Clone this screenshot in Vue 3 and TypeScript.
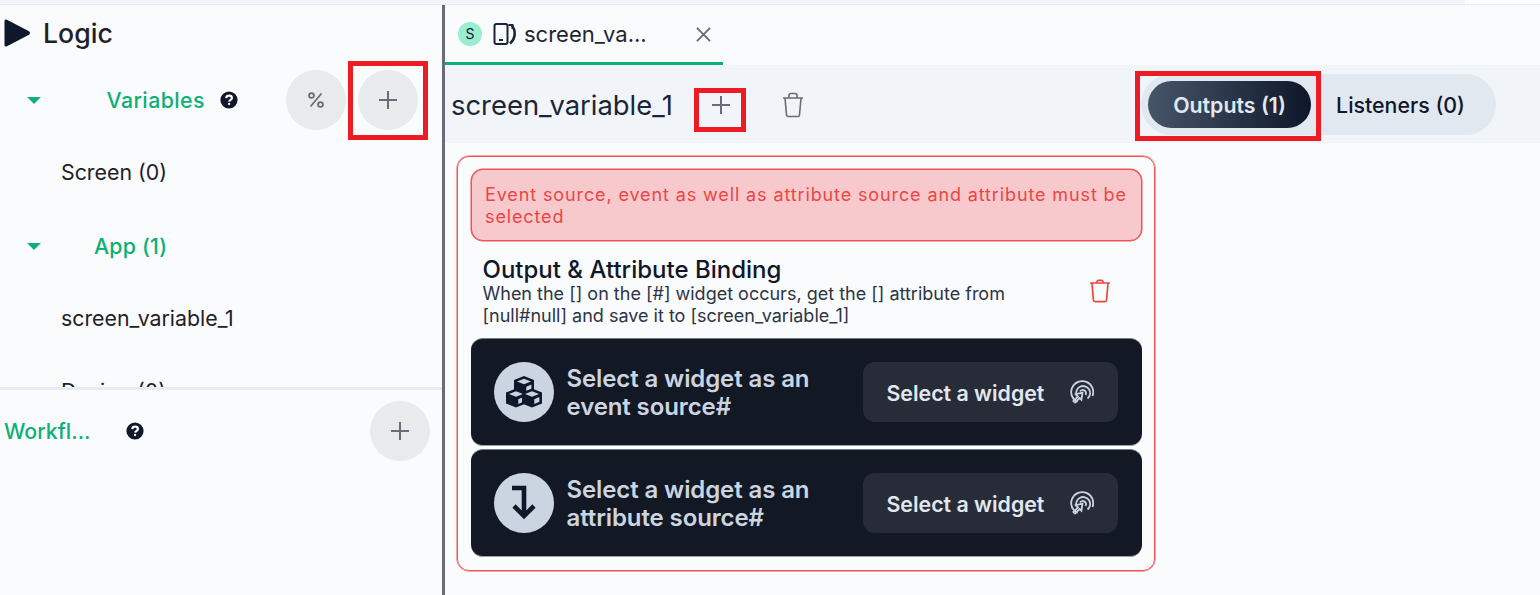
<template>
  <div class="page">
    <div class="top-strip"><div class="top-strip-end"></div></div>
    <div class="main">
      <aside class="sidebar">
        <div class="logic-section">
          <div class="logic-title">
            <svg class="play-icon" viewBox="0 0 27 30"><path d="M2.5 1.5 L25 13.2 Q27 15 25 16.8 L2.5 28.5 Q0.5 29 0.5 27 V3 Q0.5 1 2.5 1.5 Z" /></svg>
            <span>Logic</span>
          </div>
          <div class="section-row">
            <span class="caret"></span>
            <span class="section-label variables-label">Variables</span>
            <svg class="help-icon" viewBox="0 0 18 18"><circle cx="9" cy="9" r="8.6" /><path class="help-mark" d="M6.3 7.1 C6.4 5.5 7.6 4.7 9.1 4.7 C10.7 4.7 11.9 5.7 11.9 7 C11.9 8.9 9.3 8.8 9.2 10.6" /><circle class="help-dot" cx="9.1" cy="13" r="1.15" /></svg>
            <div class="row-actions">
              <button class="round-btn">
                <svg viewBox="0 0 20 20" class="percent-icon"><circle cx="5.5" cy="5.5" r="2.4" /><circle cx="14.5" cy="14.5" r="2.4" /><path d="M15.5 3.5 L4.5 16.5" /></svg>
              </button>
              <button class="round-btn">
                <svg viewBox="0 0 20 20" class="plus-icon"><path d="M10 1 V19 M1 10 H19" /></svg>
              </button>
            </div>
          </div>
          <div class="list-item">Screen (0)</div>
          <div class="section-row app-row">
            <span class="caret"></span>
            <span class="section-label app-label">App (1)</span>
          </div>
          <div class="list-item">screen_variable_1</div>
          <div class="list-item clipped">Design (0)</div>
        </div>
        <div class="workflow-section">
          <span class="section-label workflow-label">Workfl...</span>
          <svg class="help-icon workflow-help" viewBox="0 0 18 18"><circle cx="9" cy="9" r="8.6" /><path class="help-mark" d="M6.3 7.1 C6.4 5.5 7.6 4.7 9.1 4.7 C10.7 4.7 11.9 5.7 11.9 7 C11.9 8.9 9.3 8.8 9.2 10.6" /><circle class="help-dot" cx="9.1" cy="13" r="1.15" /></svg>
          <button class="round-btn workflow-add">
            <svg viewBox="0 0 20 20" class="plus-icon"><path d="M10 1 V19 M1 10 H19" /></svg>
          </button>
        </div>
      </aside>

      <section class="editor">
        <div class="tab-bar">
          <div class="tab">
            <span class="avatar">S</span>
            <svg class="tab-icon" viewBox="0 0 24 24">
              <rect x="1.5" y="2" width="13" height="20" rx="2" />
              <path d="M6 18 H10" />
              <path class="tab-icon-curve" d="M18.5 3 C23 8 23 16 17 21.5" />
              <path d="M15.5 3 H19.5 V7" />
            </svg>
            <span class="tab-title">screen_va...</span>
            <svg class="close-icon" viewBox="0 0 16 16"><path d="M1 1 L15 15 M15 1 L1 15" /></svg>
          </div>
        </div>

        <div class="toolbar">
          <span class="var-name">screen_variable_1</span>
          <svg class="plus-icon toolbar-plus" viewBox="0 0 20 20"><path d="M10 1 V19 M1 10 H19" /></svg>
          <svg class="trash-icon" viewBox="0 0 24 26">
            <path d="M2 6 H22 M8 6 V3.5 C8 2.5 8.8 1.5 10 1.5 H14 C15.2 1.5 16 2.5 16 3.5 V6 M4 6 L5.5 23 C5.6 24 6.3 24.5 7.2 24.5 H16.8 C17.7 24.5 18.4 24 18.5 23 L20 6" />
          </svg>
          <div class="toggle">
            <button class="toggle-item active">Outputs (1)</button>
            <button class="toggle-item">Listeners (0)</button>
          </div>
        </div>

        <div class="content">
          <div class="binding-card">
            <div class="error-box">Event source, event as well as attribute source and attribute must be selected</div>
            <div class="binding-head">
              <div class="binding-text">
                <div class="binding-title">Output &amp; Attribute Binding</div>
                <div class="binding-desc">When the [] on the [#] widget occurs, get the [] attribute from [null#null] and save it to [screen_variable_1]</div>
              </div>
              <svg class="trash-red" viewBox="0 0 22 24">
                <path d="M1 4 H21 M7.5 4 L8 2.4 C8.2 1.7 8.7 1.4 9.4 1.4 H12.6 C13.3 1.4 13.8 1.7 14 2.4 L14.5 4 M3 4 L4.4 21 C4.5 22 5.1 22.6 6 22.6 H16 C16.9 22.6 17.5 22 17.6 21 L19 4" />
              </svg>
            </div>
            <div class="source-list">
              <div v-for="source in sources" :key="source.label" class="source-row">
                <span class="source-badge">
                  <svg v-if="source.icon === 'cubes'" class="cubes-icon" viewBox="0 0 36 32">
                    <g v-for="pos in cubePositions" :key="pos" :transform="pos">
                      <path class="cube-dark" d="M10 0 L20 4 V15 L10 19 L0 15 V4 Z" />
                      <path class="cube-light" d="M3 5.5 L10 8.3 L17 5.5 L10 2.8 Z" />
                      <path class="cube-light" d="M12.3 10.7 L17.4 8.6 V13.3 L12.3 15.4 Z" />
                    </g>
                  </svg>
                  <svg v-else class="arrow-icon" viewBox="0 0 26 36">
                    <path d="M1 3 H13 V31 M3 21 L13 31 L23 21" />
                  </svg>
                </span>
                <span class="source-label">{{ source.label }}</span>
                <button class="select-btn">
                  <span class="select-text">Select a widget</span>
                  <svg class="target-icon" viewBox="0 0 24 24">
                    <path d="M7.5 22 A11 11 0 1 1 22.5 16" />
                    <path d="M6.6 15.5 A7 7 0 1 1 17.5 18.5" />
                    <path d="M10 11.5 A3 3 0 1 1 15.5 15" />
                    <path d="M12.5 12.6 L5.8 14.2 L8 16.4 L3.4 21 L5 22.6 L9.6 18 L11.4 19.7 Z" />
                  </svg>
                </button>
              </div>
            </div>
          </div>
        </div>
      </section>
    </div>

    <!-- annotation boxes drawn on top of the screenshot -->
    <span class="mark mark-add"></span>
    <span class="mark mark-plus"></span>
    <span class="mark mark-outputs"></span>
  </div>
</template>

<script setup lang="ts">
interface Source {
  label: string
  icon: 'cubes' | 'arrow'
}

const sources: Source[] = [
  { label: 'Select a widget as an event source#', icon: 'cubes' },
  { label: 'Select a widget as an attribute source#', icon: 'arrow' }
]

const cubePositions = ['translate(8 0)', 'translate(0 12.5)', 'translate(16 12.5)']
</script>

<style>
html,
body {
  margin: 0;
  background: #fafbfd;
}
</style>

<style scoped>
.page {
  position: relative;
  width: 1540px;
  height: 595px;
  overflow: hidden;
  background: #fafbfd;
  font-family: Inter, 'Noto Sans', sans-serif;
  color: #1f2126;
}

button {
  font-family: inherit;
  border: none;
  padding: 0;
}

.top-strip {
  height: 4px;
  background: #f1f5f9;
  border-bottom: 1px solid #e4ebf3;
  display: flex;
  justify-content: flex-end;
}

.top-strip-end {
  width: 75px;
  background: #fff;
}

.main {
  display: flex;
  height: 590px;
}

.sidebar {
  width: 442px;
  flex: none;
  border-right: 3px solid #696b78;
  display: flex;
  flex-direction: column;
}

.logic-section {
  height: 382px;
  overflow: hidden;
  border-bottom: 3px solid #e6eaf2;
  flex: none;
}

.logic-title {
  height: 55px;
  padding-left: 4px;
  display: flex;
  align-items: center;
  gap: 12px;
  font-size: 26.67px;
  font-weight: 500;
  box-sizing: border-box;
}

.play-icon {
  width: 27px;
  height: 30px;
  fill: #0f172a;
}

.section-row {
  height: 80px;
  display: flex;
  align-items: center;
  padding-left: 27px;
}

.caret {
  width: 0;
  height: 0;
  border-left: 7.5px solid transparent;
  border-right: 7.5px solid transparent;
  border-top: 7px solid #10b074;
  flex: none;
}

.section-label {
  color: #0db075;
  font-size: 21.33px;
  font-weight: 500;
  letter-spacing: 0.2px;
}

.variables-label {
  margin-left: 65.5px;
  letter-spacing: 0.42px;
}

.app-label {
  margin-left: 53px;
}

.help-icon {
  width: 18px;
  height: 18px;
  flex: none;
  margin-left: 15px;
}

.help-icon > circle:first-child {
  fill: #0f172a;
}

.help-mark {
  fill: none;
  stroke: #fff;
  stroke-width: 2.2;
}

.help-dot {
  fill: #fff;
}

.row-actions {
  margin-left: auto;
  margin-right: 24px;
  display: flex;
  gap: 12px;
}

.round-btn {
  width: 60px;
  height: 60px;
  border-radius: 50%;
  background: #e7ebeb;
  display: flex;
  align-items: center;
  justify-content: center;
  flex: none;
}

.percent-icon {
  width: 20px;
  height: 20px;
  fill: none;
  stroke: #696b78;
  stroke-width: 1.8;
}

.plus-icon {
  width: 20px;
  height: 20px;
  fill: none;
  stroke: #696b78;
  stroke-width: 2;
}

.list-item {
  height: 64px;
  padding-left: 61px;
  font-size: 21.33px;
  line-height: 24px;
  display: flex;
  align-items: center;
}

.app-row {
  margin-top: 2px;
}

.clipped {
  margin-top: 9px;
}

.workflow-section {
  display: flex;
  align-items: center;
  padding: 11px 12px 0 4px;
  height: 60px;
}

.workflow-label {
  width: 113px;
  flex: none;
  letter-spacing: 0;
}

.workflow-help {
  margin-left: 9px;
}

.workflow-add {
  margin-left: auto;
}

.editor {
  flex: 1;
  min-width: 0;
  display: flex;
  flex-direction: column;
}

.tab-bar {
  height: 60px;
  display: flex;
  flex: none;
}

.tab {
  width: 278px;
  height: 60px;
  box-sizing: border-box;
  border-bottom: 3px solid #10b074;
  padding: 0 12px 0 13px;
  display: flex;
  align-items: center;
  gap: 11px;
}

.avatar {
  width: 24px;
  height: 24px;
  border-radius: 50%;
  background: #99eed0;
  color: #0f172a;
  font-size: 14px;
  display: flex;
  align-items: center;
  justify-content: center;
  flex: none;
}

.tab-icon {
  width: 24px;
  height: 24px;
  fill: none;
  stroke: #1b2538;
  stroke-width: 2;
  flex: none;
  margin-right: -4px;
}

.tab-icon-curve {
  stroke-width: 2.6;
}

.tab-title {
  font-size: 22px;
  line-height: 26px;
  color: #1f2633;
  white-space: nowrap;
}

.close-icon {
  width: 15px;
  height: 15px;
  margin-left: auto;
  margin-top: 2px;
  fill: none;
  stroke: #696b78;
  stroke-width: 2;
}

.toolbar {
  height: 78px;
  flex: none;
  box-sizing: border-box;
  padding: 1px 0 0 6px;
  background: #f1f5f9;
  display: flex;
  align-items: center;
}

.var-name {
  font-size: 27.4px;
  color: #1b2538;
  width: 231px;
  flex: none;
  white-space: nowrap;
}

.toolbar-plus {
  margin-left: 29px;
}

.trash-icon {
  width: 24px;
  height: 26px;
  fill: none;
  stroke: #696b78;
  stroke-width: 1.6;
  margin-left: 50px;
}

.toggle {
  margin-left: auto;
  margin-right: 44px;
  width: 355px;
  height: 61px;
  box-sizing: border-box;
  padding: 7px;
  border-radius: 31px;
  background: #e2e8f0;
  display: flex;
  align-items: center;
}

.toggle-item {
  height: 47px;
  border-radius: 24px;
  background: transparent;
  color: #0f172a;
  font-size: 21.33px;
  font-weight: 500;
  width: 163px;
  flex: none;
  white-space: nowrap;
}

.toggle-item.active {
  background: linear-gradient(90deg, #475569, #0f172a);
  color: #e2e8f0;
  font-weight: 600;
  margin-right: 8px;
}

.content {
  padding: 13px 0 0 12px;
}

.binding-card {
  width: 698px;
  height: 415px;
  box-sizing: border-box;
  border: 1px solid #f15257;
  box-shadow: 0 0 0 0.5px #f15257;
  border-radius: 12px;
  padding: 12px 12.5px 0 13px;
}

.error-box {
  height: 72px;
  box-sizing: border-box;
  padding: 14px 8px 0 13px;
  background: #f7c9cc;
  border: 1px solid #f15257;
  box-shadow: 0 0 0 0.5px #f15257;
  border-radius: 12px;
  color: #ef4444;
  font-size: 18px;
  line-height: 22px;
  letter-spacing: 0.88px;
}

.binding-head {
  height: 97px;
  display: flex;
  align-items: flex-start;
  padding: 15px 31px 0 11.5px;
  box-sizing: border-box;
}

.binding-text {
  width: 570px;
  flex: none;
}

.binding-title {
  font-size: 24px;
  line-height: 27px;
  font-weight: 500;
  color: #0f172a;
}

.binding-desc {
  font-size: 18px;
  line-height: 22px;
  color: #2c3545;
}

.trash-red {
  width: 22px;
  height: 24px;
  margin-left: auto;
  margin-top: 23px;
  fill: none;
  stroke: #ef4444;
  stroke-width: 1.7;
}

.source-list {
  display: flex;
  flex-direction: column;
  gap: 3px;
}

.source-row {
  height: 108px;
  border-radius: 12px;
  background: #131924;
  border-top: 1px solid #767b86;
  border-bottom: 1px solid #9b9fa8;
  box-sizing: border-box;
  display: flex;
  align-items: center;
  padding: 0 23px;
}

.source-badge {
  width: 60px;
  height: 60px;
  border-radius: 50%;
  background: #cbd5e1;
  flex: none;
  display: flex;
  align-items: center;
  justify-content: center;
}

.cubes-icon {
  width: 36px;
  height: 32px;
}

.cube-dark {
  fill: #0f172a;
}

.cube-light {
  fill: #cbd5e1;
}

.arrow-icon {
  width: 26px;
  height: 36px;
  fill: none;
  stroke: #0f172a;
  stroke-width: 4.6;
}

.source-label {
  margin-left: 12.5px;
  padding-top: 2px;
  width: 296px;
  flex: none;
  color: #cbd5e1;
  font-size: 24px;
  line-height: 28px;
  font-weight: 600;
  letter-spacing: -0.11px;
}

.select-btn {
  width: 255px;
  height: 60px;
  border-radius: 12px;
  background: #282c38;
  color: #e2e8f0;
  font-size: 21.33px;
  font-weight: 600;
  display: flex;
  align-items: center;
  justify-content: space-between;
  padding: 0 24px;
  box-sizing: border-box;
  flex: none;
}

.select-text {
  padding-top: 2px;
}

.target-icon {
  width: 24px;
  height: 24px;
  fill: none;
  stroke: #cbd5e1;
  stroke-width: 1.8;
}

.mark {
  position: absolute;
  box-sizing: border-box;
  border: 5px solid #ed1c24;
  pointer-events: none;
}

.mark-add {
  left: 348px;
  top: 61px;
  width: 80px;
  height: 79px;
}

.mark-plus {
  left: 694px;
  top: 88px;
  width: 52px;
  height: 44px;
}

.mark-outputs {
  left: 1135px;
  top: 71px;
  width: 186px;
  height: 70px;
}
</style>
